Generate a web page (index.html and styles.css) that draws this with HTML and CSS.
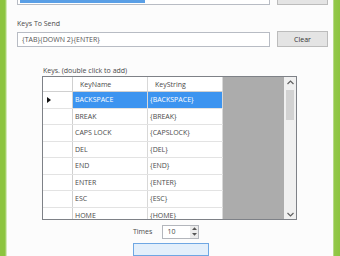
FILE: index.html
```html
<!DOCTYPE html>
<html>
<head>
<meta charset="utf-8">
<link rel="stylesheet" href="styles.css">
</head>
<body>
<div class="window">
  <div class="edge edge-left"></div>
  <div class="content">
    <div class="row top-row">
      <div class="field"><span class="sel"></span></div>
      <div class="btn"></div>
    </div>
    <div class="label">Keys To Send</div>
    <div class="row send-row">
      <div class="field"><span class="val">{TAB}{DOWN 2}{ENTER}</span></div>
      <div class="btn">Clear</div>
    </div>
    <div class="grid-label">Keys. (double click to add)</div>
    <div class="grid">
      <div class="table">
        <div class="tr head"><div class="rh"></div><div class="td">KeyName</div><div class="td">KeyString</div></div>
        <div class="tr selected"><div class="rh"><span class="arrow"></span></div><div class="td">BACKSPACE</div><div class="td">{BACKSPACE}</div></div>
        <div class="tr"><div class="rh"></div><div class="td">BREAK</div><div class="td">{BREAK}</div></div>
        <div class="tr"><div class="rh"></div><div class="td">CAPS LOCK</div><div class="td">{CAPSLOCK}</div></div>
        <div class="tr"><div class="rh"></div><div class="td">DEL</div><div class="td">{DEL}</div></div>
        <div class="tr"><div class="rh"></div><div class="td">END</div><div class="td">{END}</div></div>
        <div class="tr"><div class="rh"></div><div class="td">ENTER</div><div class="td">{ENTER}</div></div>
        <div class="tr"><div class="rh"></div><div class="td">ESC</div><div class="td">{ESC}</div></div>
        <div class="tr"><div class="rh"></div><div class="td">HOME</div><div class="td">{HOME}</div></div>
        <div class="tr"><div class="rh"></div><div class="td"></div><div class="td"></div></div>
      </div>
      <div class="empty"></div>
      <div class="scroll">
        <svg class="sarrow" width="7" height="5" viewBox="0 0 7 5"><path d="M0.5 4 L3.5 1 L6.5 4" fill="none" stroke="#606060" stroke-width="1.2"/></svg>
        <div class="track"><div class="thumb"></div></div>
        <svg class="sarrow" width="7" height="5" viewBox="0 0 7 5"><path d="M0.5 1 L3.5 4 L6.5 1" fill="none" stroke="#606060" stroke-width="1.2"/></svg>
      </div>
    </div>
    <div class="times-row">
      <span class="times-label">Times</span>
      <div class="spin">
        <span class="spin-val">10</span>
        <div class="spin-btns">
          <svg width="7" height="5" viewBox="0 0 7 5"><path d="M1 4 L3.5 1.2 L6 4 Z" fill="#555"/></svg>
          <svg width="7" height="5" viewBox="0 0 7 5"><path d="M1 1 L3.5 3.8 L6 1 Z" fill="#555"/></svg>
        </div>
      </div>
    </div>
    <div class="go-btn"></div>
  </div>
  <div class="edge edge-right"></div>
</div>
</body>
</html>
```

FILE: styles.css
```css
* { box-sizing: border-box; }
html, body { margin: 0; padding: 0; }
body {
  width: 340px;
  height: 256px;
  overflow: hidden;
  background: #fff;
  font-family: "Open Sans", "Noto Sans", sans-serif;
  font-size: 7.5px;
  color: #4a4a4a;
}
.window {
  display: flex;
  width: 340px;
  height: 256px;
  overflow: hidden;
  background: #fcfcfc;
}
.edge { flex: none; }
.edge-left {
  width: 7px;
  background: linear-gradient(to right, #8cc43f 0, #8cc43f 5px, #b9dc8e 6px, #eef6e4 7px);
}
.edge-right {
  width: 7px;
  background: linear-gradient(to right, #d9ecc2 0, #93c84a 1px, #8cc43f 100%);
}
.content {
  flex: 1;
  padding: 0 5px 0 10px;
  display: flex;
  flex-direction: column;
}
.row {
  display: flex;
  gap: 7px;
  align-items: center;
}
.top-row {
  margin-top: -11px;
  height: 16px;
}
.field {
  width: 253px;
  height: 15px;
  border: 1px solid #b8bcc4;
  background: #fff;
  display: flex;
  align-items: center;
  padding-left: 4px;
}
.top-row .field { height: 16px; padding-left: 2px; }
.sel {
  display: block;
  width: 125px;
  height: 12px;
  background: #5a9fe6;
}
.btn {
  width: 51px;
  height: 16px;
  border: 1px solid #bcbcbc;
  background: #e4e4e4;
  display: flex;
  align-items: center;
  justify-content: center;
  color: #333;
  font-size: 7px;
}
.label {
  margin-top: 14px;
  height: 10px;
  line-height: 10px;
  font-size: 7px;
}
.send-row { margin-top: 2px; }
.val { font-size: 7px; color: #555; }
.grid-label {
  margin-top: 19px;
  margin-left: 26px;
  height: 10px;
  line-height: 10px;
  font-size: 7px;
}
.grid {
  margin-left: 25px;
  width: 255px;
  height: 153px;
  border: 1px solid #7e8187;
  display: flex;
  overflow: hidden;
  background: #fff;
}
.table {
  width: 180px;
  flex: none;
  overflow: hidden;
  background: #fff;
}
.tr {
  display: flex;
  height: 16.5px;
  border-bottom: 1px solid #e3e3e3;
}
.tr.head {
  height: 15px;
  border-bottom: 1px solid #d0d0d0;
}
.rh {
  width: 30px;
  flex: none;
  border-right: 1px solid #d0d0d0;
  display: flex;
  align-items: center;
  padding-left: 4px;
}
.td {
  width: 75px;
  flex: none;
  border-right: 1px solid #d8d8d8;
  display: flex;
  align-items: center;
  padding-left: 2px;
  white-space: nowrap;
  font-size: 7px;
}
.head .td { padding-left: 7px; }
.selected .td {
  background: #3c94f0;
  color: #fff;
}
.arrow {
  width: 0;
  height: 0;
  border-left: 4px solid #111;
  border-top: 3.5px solid transparent;
  border-bottom: 3.5px solid transparent;
}
.empty {
  width: 61px;
  flex: none;
  background: #acacac;
}
.scroll {
  flex: 1;
  background: #f0f0f0;
  display: flex;
  flex-direction: column;
  align-items: center;
  padding: 3px 0 2px;
}
.sarrow { flex: none; }
.track {
  flex: 1;
  width: 100%;
  padding: 5px 2px;
}
.thumb {
  height: 30px;
  background: #d2d2d2;
  width: 8px;
  margin: 0 auto;
}
.times-row {
  margin-top: 5px;
  margin-left: 116px;
  display: flex;
  align-items: center;
  gap: 10px;
  height: 14px;
}
.times-label { font-size: 7px; }
.spin {
  width: 37px;
  height: 14px;
  border: 1px solid #b3b6bc;
  background: #fff;
  display: flex;
  align-items: center;
  justify-content: space-between;
  padding-left: 4px;
}
.spin-val { font-size: 7px; }
.spin-btns {
  width: 8px;
  height: 12px;
  display: flex;
  flex-direction: column;
  justify-content: space-around;
  align-items: center;
  background: #ececec;
}
.go-btn {
  margin-top: 4px;
  margin-left: 116px;
  width: 76px;
  height: 14px;
  border: 1px solid #6fa7e3;
  background: #e3effb;
}
```
